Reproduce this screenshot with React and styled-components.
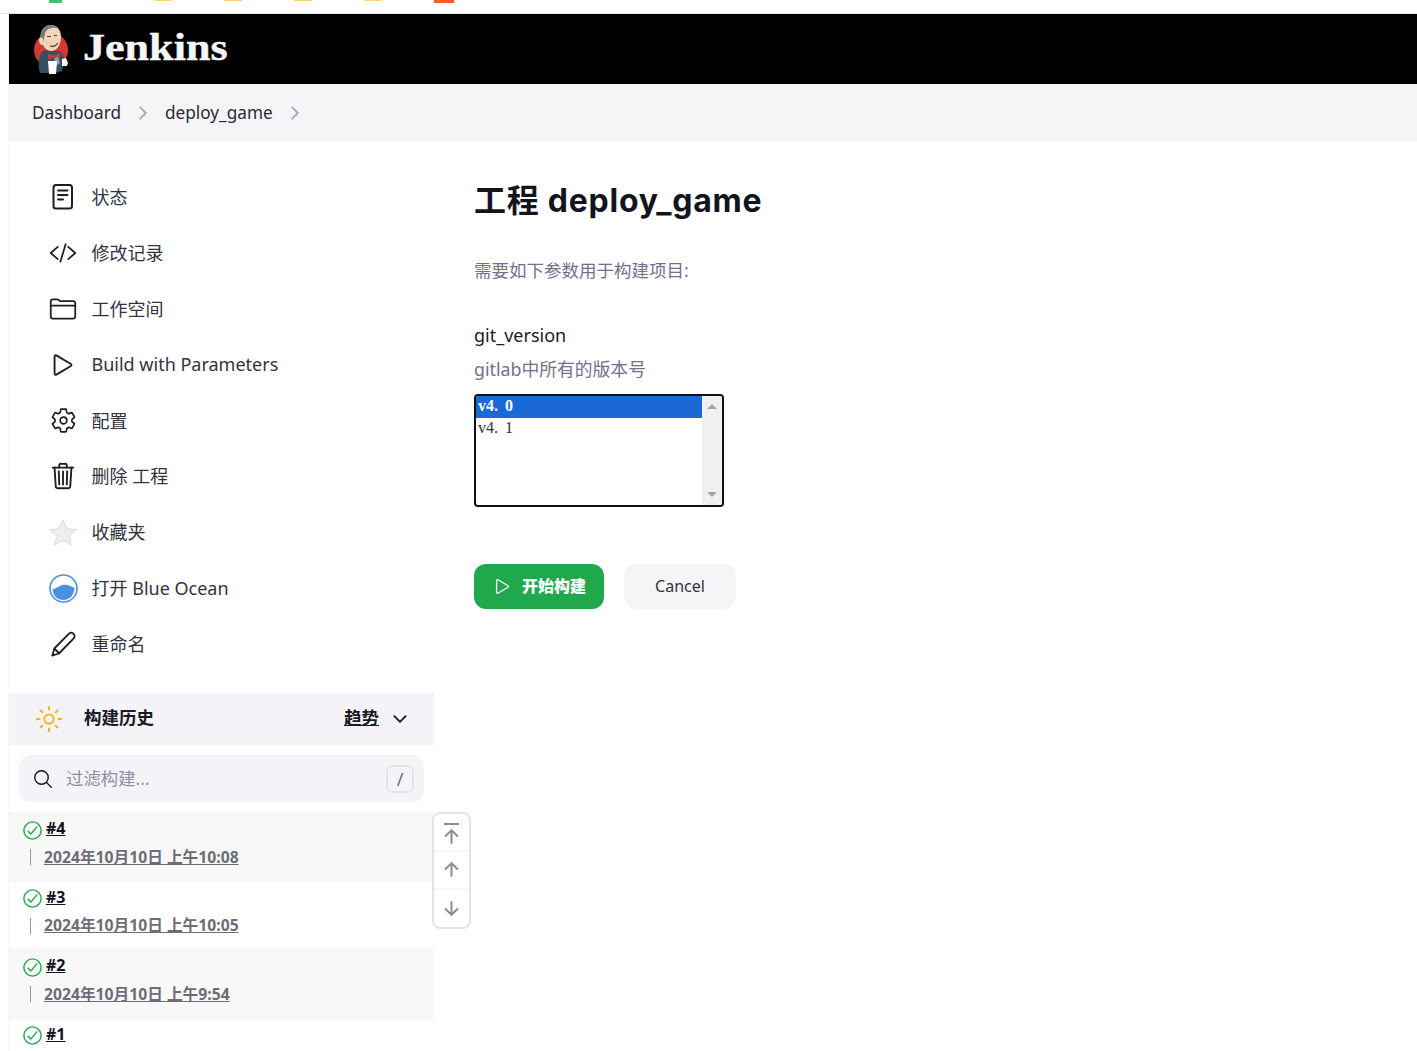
import React from "react";
import styled, { createGlobalStyle } from "styled-components";
import {
  IoCodeSlashOutline, IoFolderOutline, IoPlayOutline,
  IoSettingsOutline, IoTrashOutline, IoSearchOutline,
  IoChevronDownOutline, IoChevronForwardOutline, IoCheckmarkCircleOutline,
  IoArrowUpOutline, IoArrowDownOutline, IoSunnyOutline,
} from "react-icons/io5";

const SANS = `"Noto Sans", "Noto Sans CJK SC", sans-serif`;
const Global = createGlobalStyle`
  html, body { margin: 0; padding: 0; background: #fff; }
  body { font-family: ${SANS}; color: #14141f; overflow: hidden; }
  * { box-sizing: border-box; }
`;
const Page = styled.div`height: 1051px; overflow: hidden; display: flex; flex-direction: column;`;
const BrowserStrip = styled.div`height: 14px; flex: none; border-bottom: 1px solid #e4e4e4; display: flex; align-items: flex-start; padding-left: 49px;`;
const Tab = styled.span`
  display: block; flex: none; width: ${p => p.$w}px; height: ${p => p.$h}px; margin-right: ${p => p.$gap}px; background: ${p => p.$c};
`;
const Frame = styled.div`flex: 1; margin-left: 8px; border-left: 1px solid #f6f6f6; display: flex; flex-direction: column; min-height: 0;`;
const Header = styled.header`height: 70px; flex: none; background: #000; display: flex; align-items: center; padding-left: 22px; gap: 12px;`;
const Brand = styled.span`font-family: "Liberation Serif", serif; font-weight: 700; font-size: 38px; color: #f6f6f6; padding-bottom: 5px; transform: scaleX(1.16); transform-origin: left center; -webkit-text-stroke: 0.4px #f6f6f6;`;
const Crumbs = styled.nav`height: 57px; flex: none; background: #f5f5f8; display: flex; align-items: center; padding-left: 23px; font-size: 17.2px; color: #2a2a36;`;
const Crumb = styled.span``;
const CrumbArrow = styled.span`display: flex; color: #a9a9b8; font-size: 20px; margin: 0 11.5px 0 12.500px;`;
const Main = styled.div`flex: 1; display: flex; min-height: 0;`;
const Side = styled.aside`width: 425px; flex: none; position: relative; padding-top: 28px;`;
const Tasks = styled.ul`list-style: none; margin: 0 0 21px; padding: 0;`;
const Task = styled.li`height: 55.9px; display: flex; align-items: center; padding-left: 39px; font-size: 18px; color: #33333f;`;
const TaskIcon = styled.span`width: 30px; height: 30px; margin-right: 13.5px; flex: none; display: flex; align-items: center; justify-content: center; font-size: ${p => p.$size || 30}px; color: #1d1d28;`;
const TaskLabel = styled.span`padding-bottom: 2px;`;
const HistoryBar = styled.div`height: 52px; background: #f3f3f8; display: flex; align-items: center; padding: 0 24px 0 25px; font-size: 17.5px; font-weight: 700; color: #1a1a24;`;
const SunIcon = styled.span`display: flex; font-size: 30px; color: #f9ad1d; margin-right: 20px;`;
const HistoryTitle = styled.span`flex: 1; padding-bottom: 5px;`;
const Trend = styled.span`text-decoration: underline; margin-right: 11px; padding-bottom: 5px;`;
const TrendChevron = styled.span`display: flex; font-size: 20px;`;
const Search = styled.div`height: 47px; margin: 10px; border-radius: 12px; background: #f3f3f8; display: flex; align-items: center; padding: 0 10px 0 13px; font-size: 17.4px; color: #8f8fa5;`;
const SearchIcon = styled.span`display: flex; font-size: 22px; color: #14141f; margin-right: 12px;`;
const SearchHint = styled.span`flex: 1; padding-bottom: 3px;`;
const Key = styled.span`width: 28px; height: 28px; border: 2px solid #e2e2ec; border-radius: 6px; display: flex; align-items: center; justify-content: center; font-size: 18px; color: #6a6a80;`;
const Row = styled.div`height: 68.67px; background: ${p => (p.$alt ? "#f8f8f8" : "#fff")}; border-top: 1px solid #f5f5f5; padding: 0 0 0 11.5px;`;
const RowTop = styled.div`height: 32px; display: flex; align-items: center; gap: 2.5px;`;
const Status = styled.span`display: flex; font-size: 23px; color: #20a84c; margin-top: 2px;`;
const BuildId = styled.span`font-size: 16px; font-weight: 700; text-decoration: underline; color: #14141f; position: relative; top: -1px;`;
const RowDate = styled.div`display: flex; align-items: center; height: 24px; margin-top: -1px; padding-left: 9.5px;`;
const Tick = styled.span`width: 1px; height: 16px; background: #8d9ba3; margin: 2px 13px 0 0;`;
const DateLink = styled.span`font-size: 15.7px; font-weight: 700; text-decoration: underline; color: #6d6d78;`;
const Scroller = styled.div`position: absolute; left: 423px; top: 670.5px; width: 39px; height: 117px; border: 2px solid #e1e5e9; border-radius: 8px; background: #fff; display: flex; flex-direction: column;`;
const ScrollBtn = styled.span`height: ${p => p.$h}px; flex: none; display: flex; align-items: center; justify-content: center; font-size: 21px; color: #8b8b8b; position: relative; padding-top: ${p => p.$pad || 0}px; & + & { border-top: 2px solid #f6f7f8; }`;
const TopLine = styled.span`position: absolute; left: 10px; width: 15px; top: 9px; height: 2px; background: #8b8b8b;`;
const Content = styled.main`flex: 1; padding-left: 40px;`;
const Title = styled.h1`margin: 40px 0 0; font-family: Inter, "Noto Sans CJK SC", sans-serif; font-size: 32px; line-height: 40px; font-weight: 700; color: #14141f; letter-spacing: 0.75px;`;
const Lead = styled.p`margin: 37px 0 0; font-size: 17.5px; line-height: 24px; color: #71718a;`;
const Label = styled.div`margin-top: 41px; font-size: 18px; line-height: 24px; color: #1a1a24;`;
const Hint = styled.div`margin-top: 10px; font-size: 17.8px; line-height: 24px; color: #71718a;`;
const ListBox = styled.div`margin-top: 13px; width: 250px; height: 113px; border: 2px solid #111; border-radius: 4px; display: flex; overflow: hidden; font-family: "Liberation Serif", serif; font-size: 16px;`;
const Options = styled.div`flex: 1;`;
const Option = styled.div`height: 21.5px; line-height: 19px; padding-left: 2px; background: ${p => (p.$on ? "#1a69d6" : "#fff")}; color: ${p => (p.$on ? "#fff" : "#333")}; font-weight: ${p => (p.$on ? 700 : 400)};`;
const Dot = styled.span`letter-spacing: 7px;`;
const Bar = styled.div`width: 20px; background: #f0f0f0; display: flex; flex-direction: column; justify-content: space-between; align-items: center; padding: 8px 0;`;
const Arrow = styled.span`width: 0; height: 0; border-left: 5px solid transparent; border-right: 5px solid transparent; ${p => (p.$up ? "border-bottom" : "border-top")}: 5px solid #a3a3a3;`;
const Actions = styled.div`display: flex; gap: 20px; margin-top: 57px;`;
const Primary = styled.span`width: 130px; height: 45px; border-radius: 12px; background: #20a84c; color: #fff; display: flex; align-items: center; padding-left: 18px; gap: 9px; font-size: 16px; font-weight: 900;`;
const PrimaryText = styled.span`padding-bottom: 3px;`;
const PlayIcon = styled.span`display: flex; font-size: 21px;`;
const Secondary = styled.span`width: 112px; height: 45px; border-radius: 12px; background: #f5f5f8; color: #33333f; display: flex; align-items: center; justify-content: center; font-size: 16px; padding-bottom: 2px;`;

const Logo = () => (
  <svg width="40" height="52" viewBox="0 0 40 52">
    <circle cx="20" cy="27" r="17" fill="#d33833" />
    <path d="M9 50c-2-6-2-14 1-20 2-3 5-3 7-3l11 1c4 2 5 6 5 10l-2 10-6 2z" fill="#335061" />
    <path d="M10 13C10 6 14 2 20 2s10 5 10 12c0 8-4 14-10 14-6 0-10-7-10-15z" fill="#f0d6b7" />
    <path d="M10 20C7 10 12 2 20 2c3 0 5 1 6 3-6-1-11 1-12 6-1 3-1 7-2 9z" fill="#7b797b" />
    <path d="M8 16c1-2 3-2 4 0l1 5c-2 2-5 1-5-5z" fill="#f0d6b7" />
    <path d="M17 31l6 1.500 6-3-.500 6-5-1.500-6 3z" fill="#d33833" />
    <path d="M23 35l4-1 2 6-4 3z" fill="#8fa3ad" />
    <path d="M17 38h9l-1 13h-7z" fill="#fff" />
    <path d="M31 36l4-1 2 5-1 3-5 0z" fill="#f2f2f2" />
    <path d="M16 13.500h4M23 12.500h3M19 23c3 1 6 0 8-3" stroke="#49392f" strokeWidth="1.100" fill="none" />
  </svg>
);
const DocIcon = () => (
  <svg width="30" height="30" viewBox="0 0 30 30" fill="none" stroke="currentColor" strokeWidth="2" strokeLinecap="round">
    <rect x="5.500" y="3" width="18.500" height="23.500" rx="2.500" />
    <path d="M10 8.500h9.500M10 13h9.500M10 17.500h5" />
  </svg>
);
const PencilIcon = () => (
  <svg width="30" height="30" viewBox="0 0 30 30" fill="none" stroke="currentColor" strokeWidth="1.800" strokeLinejoin="round">
    <path d="M4.500 26.500l1.800-7L21 4.700c1.200-1.200 3-1.200 4.200 0l.5.500c1.200 1.200 1.200 3 0 4.200L11 24.500z" />
    <path d="M6.300 19.500l5 5" />
    <path d="M4.500 26.500l1-.3-.7-.8z" fill="currentColor" />
  </svg>
);
const Star = () => (
  <svg width="28" height="26" viewBox="0 0 28 26">
    <path d="M14 1l4 8.600 9.300 1.100-6.900 6.300 1.900 9-8.300-4.600L5.700 26l1.900-9L.7 10.700 10 9.600z" fill="#eeeeec" stroke="#dcdcd8" />
  </svg>
);
const Ocean = () => (
  <svg width="29" height="29" viewBox="0 0 29 29">
    <circle cx="14.500" cy="14.500" r="13.500" fill="#fff" stroke="#4a90e2" strokeWidth="1.600" />
    <path d="M3.500 15.500c4-1 6-3.500 10-4.500 5-1 8 1 12 3-.2 7-5 12-11 12S4 22 3.500 15.500z" fill="#4a90e2" />
  </svg>
);
const tasks = [
  [<DocIcon />, "状态"], [<IoCodeSlashOutline />, "修改记录", 28], [<IoFolderOutline />, "工作空间", 28],
  [<IoPlayOutline />, "Build with Parameters"], [<IoSettingsOutline />, "配置", 27], [<IoTrashOutline />, "删除 工程"],
  [<Star />, "收藏夹"], [<Ocean />, "打开 Blue Ocean"], [<PencilIcon />, "重命名"],
];
const builds = [["#4", "2024年10月10日 上午10:08", true], ["#3", "2024年10月10日 上午10:05"], ["#2", "2024年10月10日 上午9:54", true], ["#1", ""]];
const tabs = [[13, 3, 92, "#4cbb6c"], [18, 1, 52, "#fbd473"], [18, 1, 52, "#fbd473"], [18, 1, 52, "#fbd473"], [18, 1, 52, "#fbd473"], [20, 3, 0, "#fa5a2d"]];

export default function App() {
  return (
    <Page>
      <Global />
      <BrowserStrip>{tabs.map(([w, h, g, c], i) => <Tab key={i} $w={w} $h={h} $gap={g} $c={c} />)}</BrowserStrip>
      <Frame>
        <Header><Logo /><Brand>Jenkins</Brand></Header>
        <Crumbs>
          <Crumb>Dashboard</Crumb><CrumbArrow><IoChevronForwardOutline /></CrumbArrow>
          <Crumb>deploy_game</Crumb><CrumbArrow><IoChevronForwardOutline /></CrumbArrow>
        </Crumbs>
        <Main>
          <Side>
            <Tasks>{tasks.map(([icon, t, size]) => <Task key={t}><TaskIcon $size={size}>{icon}</TaskIcon><TaskLabel>{t}</TaskLabel></Task>)}</Tasks>
            <HistoryBar>
              <SunIcon><IoSunnyOutline /></SunIcon><HistoryTitle>构建历史</HistoryTitle>
              <Trend>趋势</Trend><TrendChevron><IoChevronDownOutline /></TrendChevron>
            </HistoryBar>
            <Search>
              <SearchIcon><IoSearchOutline /></SearchIcon><SearchHint>过滤构建...</SearchHint><Key>/</Key>
            </Search>
            {builds.map(([id, d, alt]) => (
              <Row key={id} $alt={alt}>
                <RowTop><Status><IoCheckmarkCircleOutline /></Status><BuildId>{id}</BuildId></RowTop>
                {d && <RowDate><Tick /><DateLink>{d}</DateLink></RowDate>}
              </Row>
            ))}
            <Scroller>
              <ScrollBtn $h={36} $pad={9}><TopLine /><IoArrowUpOutline /></ScrollBtn>
              <ScrollBtn $h={38}><IoArrowUpOutline /></ScrollBtn>
              <ScrollBtn $h={39}><IoArrowDownOutline /></ScrollBtn>
            </Scroller>
          </Side>
          <Content>
            <Title>工程 deploy_game</Title>
            <Lead>需要如下参数用于构建项目:</Lead>
            <Label>git_version</Label>
            <Hint>gitlab中所有的版本号</Hint>
            <ListBox>
              <Options>
                <Option $on>v4<Dot>.</Dot>0</Option>
                <Option>v4<Dot>.</Dot>1</Option>
              </Options>
              <Bar><Arrow $up /><Arrow /></Bar>
            </ListBox>
            <Actions>
              <Primary><PlayIcon><IoPlayOutline /></PlayIcon><PrimaryText>开始构建</PrimaryText></Primary>
              <Secondary>Cancel</Secondary>
            </Actions>
          </Content>
        </Main>
      </Frame>
    </Page>
  );
}
